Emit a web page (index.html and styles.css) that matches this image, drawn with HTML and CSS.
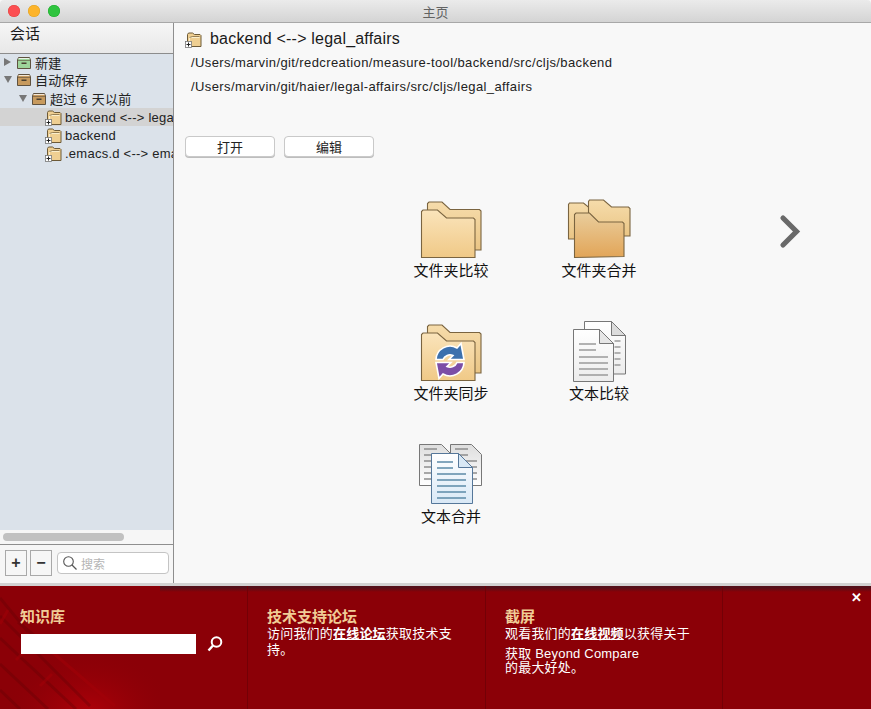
FILE: index.html
```html
<!DOCTYPE html>
<html lang="zh">
<head>
<meta charset="utf-8">
<title>主页</title>
<link rel="stylesheet" href="styles.css">
</head>
<body>
<svg class="defs" width="0" height="0" aria-hidden="true">
  <defs>
    <linearGradient id="fback" x1="0" y1="0" x2="0" y2="1"><stop offset="0" stop-color="#f6dcab"/><stop offset="1" stop-color="#eac585"/></linearGradient>
    <linearGradient id="ffront" x1="0" y1="0" x2="0" y2="1"><stop offset="0" stop-color="#fae4bb"/><stop offset="1" stop-color="#f0c987"/></linearGradient>
    <linearGradient id="fdark" x1="0" y1="0" x2="0" y2="1"><stop offset="0" stop-color="#e9cd9c"/><stop offset="1" stop-color="#e2a558"/></linearGradient>
    <linearGradient id="page" x1="0" y1="0" x2="0" y2="1"><stop offset="0" stop-color="#fff"/><stop offset="1" stop-color="#ececec"/></linearGradient>
    <linearGradient id="pagegrey" x1="0" y1="0" x2="0" y2="1"><stop offset="0" stop-color="#dedede"/><stop offset="1" stop-color="#fff"/></linearGradient>
    <linearGradient id="blue" x1="0" y1="0" x2="0" y2="1"><stop offset="0" stop-color="#fff"/><stop offset="1" stop-color="#d9e8f6"/></linearGradient>
    <g id="mini-folder">
      <path d="M2.500 15.500V3.500l1-1.500h4l2 1.500h5.500l1 1v11z" fill="#efcf92" stroke="#6d5a37"/>
      <path d="M4.500 14.500V6.500h10" fill="none" stroke="#fbeecb"/>
      <path d="M4.500 6.500l3-1h7" fill="none" stroke="#7d6a45" stroke-width=".8"/>
      <rect x=".5" y="10.500" width="6" height="6" fill="#fff" stroke="#777" stroke-width=".8"/>
      <path d="M3.500 11.500v4M1.500 13.500h4" stroke="#222" stroke-width="1"/>
    </g>
    <g id="mini-box">
      <path d="M2.500 3.500h11l1 2.500v8.500h-13V6z" fill="currentColor" stroke="#5f5240"/>
      <path d="M2.500 4.500h11" stroke="#fff" stroke-opacity=".75"/>
      <path d="M1.500 6.500h13" stroke="#5f5240" stroke-opacity=".6"/>
      <rect x="5.500" y="8.500" width="5" height="1.500" fill="#4a4030"/>
    </g>
  </defs>
</svg>
<div class="window">
  <header class="titlebar">
    <div class="lights"><span class="light red"></span><span class="light amber"></span><span class="light green"></span></div>
    <span class="title">主页</span>
  </header>
  <div class="body">
    <aside class="sidebar">
      <div class="side-head">会话</div>
      <ul class="tree">
        <li class="row l0"><span class="tri right"></span><svg class="ico box-green" width="16" height="16"><use href="#mini-box"/></svg><span class="lbl">新建</span></li>
        <li class="row l0"><span class="tri down"></span><svg class="ico box-tan" width="16" height="16"><use href="#mini-box"/></svg><span class="lbl">自动保存</span></li>
        <li class="row l1"><span class="tri down"></span><svg class="ico box-tan" width="16" height="16"><use href="#mini-box"/></svg><span class="lbl">超过 6 天以前</span></li>
        <li class="row l2 sel"><svg class="ico" width="17" height="17"><use href="#mini-folder"/></svg><span class="lbl">backend &lt;--&gt; legal_affairs</span></li>
        <li class="row l2"><svg class="ico" width="17" height="17"><use href="#mini-folder"/></svg><span class="lbl">backend</span></li>
        <li class="row l2"><svg class="ico" width="17" height="17"><use href="#mini-folder"/></svg><span class="lbl">.emacs.d &lt;--&gt; emacs</span></li>
      </ul>
      <div class="hscroll"><div class="thumb"></div></div>
      <div class="side-foot">
        <button class="sq">+</button>
        <button class="sq">−</button>
        <div class="search">
          <svg width="16" height="16" viewBox="0 0 16 16"><circle cx="6.500" cy="6.500" r="4.800" fill="none" stroke="#555" stroke-width="1.100"/><path d="M10 10l4.500 4.500" stroke="#555" stroke-width="1.200"/></svg>
          <span>搜索</span>
        </div>
      </div>
    </aside>
    <main class="content">
      <div class="head">
        <svg class="ico" width="17" height="17"><use href="#mini-folder"/></svg>
        <h1>backend &lt;--&gt; legal_affairs</h1>
      </div>
      <p class="path first">/Users/marvin/git/redcreation/measure-tool/backend/src/cljs/backend</p>
      <p class="path">/Users/marvin/git/haier/legal-affairs/src/cljs/legal_affairs</p>
      <div class="actions"><button class="btn">打开</button><button class="btn">编辑</button></div>
      <div class="launch">
        <div class="grid">
          <div class="tile">
            <svg width="64" height="62" viewBox="0 0 64 62">
              <path d="M8.500 53V6.500l1.500-1.500h13l8 7.500h29.500l1.500 1.500v39H54" fill="url(#fback)" stroke="#7a6440" stroke-width="1.100"/>
              <path d="M2.500 60.500V14.500l1.500-1.500h14.500l9 8h27l1.500 1.500v38z" fill="url(#ffront)" stroke="#7a6440" stroke-width="1.100"/>
            </svg>
            <span>文件夹比较</span>
          </div>
          <div class="tile">
            <svg width="64" height="62" viewBox="0 0 64 62">
              <path d="M1.500 42V7.500l1-1.500h14l6 5h8v31z" fill="url(#fback)" stroke="#7a6440" stroke-width="1.100"/>
              <path d="M21.500 39V4.500l1-1.500h14l8 7h17l1.500 1.500V39H56" fill="url(#fback)" stroke="#7a6440" stroke-width="1.100"/>
              <path d="M7.500 60.500V17.500l1.500-1.500h13.500l9 9h24l1.500 1.500v33z" fill="url(#fdark)" stroke="#7a6440" stroke-width="1.100"/>
            </svg>
            <span>文件夹合并</span>
          </div>
          <div class="tile">
            <svg width="64" height="62" viewBox="0 0 64 62">
              <path d="M8.500 53V6.500l1.500-1.500h13l8 7.500h29.500l1.500 1.500v39H54" fill="url(#fback)" stroke="#7a6440" stroke-width="1.100"/>
              <path d="M2.500 60.500V14.500l1.500-1.500h14.500l9 8h27l1.500 1.500v38z" fill="url(#ffront)" stroke="#7a6440" stroke-width="1.100"/>
              <path d="M17 39.500A14 14 0 0 1 38 28l4-4.500L45 39.500H30l4-4A7.500 7.500 0 0 0 24 39.500z" fill="#3c70ad" stroke="#fff" stroke-width="1.600"/>
              <path d="M45 42.500A14 14 0 0 1 24 54l-4 4.500L17 42.500H32l-4 4A7.500 7.500 0 0 0 38 42.500z" fill="#7c4ea6" stroke="#fff" stroke-width="1.600"/>
            </svg>
            <span>文件夹同步</span>
          </div>
          <div class="tile">
            <svg width="64" height="62" viewBox="0 0 64 62">
              <path d="M17.500 1.500h27l14 14v38.500h-41z" fill="url(#page)" stroke="#777"/>
              <path d="M44.500 1.500v14h14z" fill="#dcdcdc" stroke="#777"/>
              <path d="M47.500 21h6M47.500 27h6M47.500 33h6M47.500 39h6M47.500 45h6" stroke="#9b9b9b" stroke-width="1.400"/>
              <path d="M6.500 9.500h26l14 14v38h-40z" fill="url(#page)" stroke="#777"/>
              <path d="M32.500 9.500v14h14z" fill="#e6e6e6" stroke="#777"/>
              <path d="M12 24h17M12 30h17M12 37h29M12 43h29M12 49h29M12 55h29" stroke="#9b9b9b" stroke-width="1.500"/>
            </svg>
            <span>文本比较</span>
          </div>
          <div class="tile">
            <svg width="64" height="62" viewBox="0 0 64 62">
              <path d="M.5 1.500h22l9 9v32H.5z" fill="url(#pagegrey)" stroke="#777"/>
              <path d="M31.500 1.500h21l10 10v31h-31z" fill="url(#pagegrey)" stroke="#777"/>
              <path d="M5 6h13M5 12h13M5 18h22M5 24h22M5 30h22M5 36h22M36 6h13M36 12h13M36 18h22M36 24h22M36 30h22M36 36h22" stroke="#8d8d8d" stroke-width="1.500"/>
              <path d="M12.500 10.500h27l14 14v36h-41z" fill="url(#blue)" stroke="#55779a"/>
              <path d="M39.500 10.500v14h14z" fill="#d8e8f5" stroke="#55779a"/>
              <path d="M18 19h16M18 25h16M18 31h29M18 37h29M18 43h29M18 49h29M18 55h29" stroke="#5c8aa8" stroke-width="1.500"/>
            </svg>
            <span>文本合并</span>
          </div>
        </div>
        <svg class="next" width="24" height="36" viewBox="0 0 24 36"><path d="M5 4l13.500 13.500L5 31" fill="none" stroke="#696969" stroke-width="5.200" stroke-linecap="round"/></svg>
      </div>
    </main>
  </div>
  <div class="split"></div>
  <footer class="banner">
    <svg class="texture" width="160" height="123" viewBox="0 0 160 123">
      <defs><radialGradient id="glow" cx=".55" cy="1.050" r=".55"><stop offset="0" stop-color="#b20009"/><stop offset="1" stop-color="#8b0007" stop-opacity="0"/></radialGradient></defs>
      <rect width="160" height="123" fill="url(#glow)"/>
      <path d="M0 12l28 34M0 52l76 71M0 78l48 45M0 104l20 19M18 36l36 30M0 30l90 90" stroke="#5c0005" stroke-opacity=".32" stroke-width="3" fill="none"/>
      <path d="M45 60l70 60M8 24l-8 14M28 62l-12 12M52 88l-12 12" stroke="#a30008" stroke-opacity=".5" stroke-width="3" fill="none"/>
    </svg>
    <div class="strip"></div>
    <section class="col c1">
      <h2>知识库</h2>
      <div class="kb"><div class="kb-input"></div>
        <svg width="18" height="18" viewBox="0 0 18 18"><circle cx="10.500" cy="7" r="4.800" fill="none" stroke="#fff" stroke-width="2"/><path d="M7 10.500l-4.500 5" stroke="#fff" stroke-width="2.400"/></svg>
      </div>
    </section>
    <section class="col c2">
      <h2>技术支持论坛</h2>
      <p>访问我们的<a>在线论坛</a>获取技术支持。</p>
    </section>
    <section class="col c3">
      <h2>截屏</h2>
      <p class="tight1">观看我们的<a>在线视频</a>以获得关于</p>
      <p class="tight2">获取 Beyond Compare<br>的最大好处。</p>
    </section>
    <section class="col c4"><span class="close">✕</span></section>
  </footer>
</div>
</body>
</html>
```

FILE: styles.css
```css
* { box-sizing: border-box; }
html, body { margin: 0; padding: 0; height: 100%; }
body {
  width: 871px;
  height: 709px;
  overflow: hidden;
  font-family: "Liberation Sans", "Noto Sans CJK SC", sans-serif;
  color: #1a1a1a;
}
.defs { position: absolute; }
.window { display: flex; flex-direction: column; width: 871px; height: 709px; background: #f8f8f8; }

.titlebar {
  position: relative;
  flex: 0 0 23px;
  display: flex;
  align-items: center;
  justify-content: center;
  background: linear-gradient(#ebebeb, #d4d4d4);
  border-bottom: 1px solid #a8a8a8;
  border-radius: 4px 4px 0 0;
}
.lights { position: absolute; left: 8px; top: 5px; display: flex; gap: 8px; }
.light { width: 12px; height: 12px; border-radius: 50%; }
.red { background: #fc4f52; box-shadow: inset 0 0 0 .5px #e0443e; }
.amber { background: #fdb42a; box-shadow: inset 0 0 0 .5px #dea123; }
.green { background: #2fc43f; box-shadow: inset 0 0 0 .5px #1aab29; }
.title { font-size: 13px; color: #626262; }

.body { flex: 0 0 560px; display: flex; }
.sidebar {
  flex: 0 0 174px;
  width: 174px;
  display: flex;
  flex-direction: column;
  border-right: 1px solid #8e8e8e;
  background: #f6f6f6;
  overflow: hidden;
}
.side-head {
  flex: 0 0 31px;
  padding: 1px 0 0 10px;
  font-size: 15px;
  line-height: 19px;
  background: linear-gradient(#f6f6f6, #e8e8e8);
  border-bottom: 1px solid #8c8c8c;
}
.tree {
  flex: 1;
  margin: 0;
  padding: 0;
  list-style: none;
  background: #dbe2ea;
  overflow: hidden;
}
.row {
  display: flex;
  align-items: center;
  height: 18px;
  font-size: 13px;
  white-space: nowrap;
  color: #222;
}
.row.l0 { padding-left: 4px; }
.row.l0:first-child { height: 16px; }
.row.l1 { padding-left: 19px; height: 20px; }
.row.l2 { padding-left: 45px; }
.row.sel { background: #d3d3d3; }
.tri { flex: 0 0 auto; width: 0; height: 0; margin-right: 4px; }
.tri.right { border-left: 7px solid #777; border-top: 4px solid transparent; border-bottom: 4px solid transparent; margin-right: 5px; }
.tri.down { border-top: 7px solid #777; border-left: 4px solid transparent; border-right: 4px solid transparent; }
.ico { flex: 0 0 auto; display: block; }
.box-green { color: #9ed49a; }
.box-tan { color: #c79a5e; }
.lbl { margin-left: 3px; letter-spacing: .25px; }

.hscroll { flex: 0 0 14px; padding: 3px 3px 0; background: #f6f6f6; }
.thumb { width: 121px; height: 8px; border-radius: 4px; background: #c1c1c1; }
.side-foot {
  flex: 0 0 39px;
  display: flex;
  align-items: center;
  gap: 3px;
  padding: 0 4px 2px 5px;
  border-top: 1px solid #8e8e8e;
  background: #f6f6f6;
}
.sq {
  width: 22px;
  height: 26px;
  padding: 0;
  background: #f6f6f6;
  border: 1px solid #a9a9a9;
  font: bold 16px "Liberation Sans", sans-serif;
  color: #333;
}
.search {
  display: flex;
  align-items: center;
  gap: 3px;
  width: 112px;
  height: 22px;
  margin-left: 2px;
  padding-left: 4px;
  background: #fff;
  border: 1px solid #c4c4c4;
  border-radius: 4px;
  font-size: 12px;
  color: #b5b5b5;
}

.content { flex: 1; display: flex; flex-direction: column; padding: 6px 0 0 11px; background: #f8f8f8; min-width: 0; }
.head { display: flex; align-items: center; gap: 8px; height: 20px; }
h1 { margin: 0; font-weight: 400; font-size: 16px; letter-spacing: .2px; color: #1a1a1a; }
.path { margin: 0 0 0 6px; font-size: 13px; line-height: 24px; letter-spacing: .4px; color: #222; }
.path.first { margin-top: 2px; }
.actions { display: flex; gap: 9px; margin-top: 37px; }
.btn {
  width: 90px;
  height: 21px;
  padding: 0 0 1px;
  background: #fff;
  border: 1px solid #c9c9c9;
  border-radius: 4px;
  box-shadow: 0 1px 0 #bdbdbd;
  font: 13px "Liberation Sans", "Noto Sans CJK SC", sans-serif;
  color: #222;
}
.launch { display: flex; align-items: flex-start; margin-top: 40px; }
.grid { display: grid; grid-template-columns: 148px 148px; grid-auto-rows: 123px; margin-left: 192px; }
.tile { display: flex; flex-direction: column; align-items: center; font-size: 15px; line-height: 20px; color: #111; }
.tile svg { display: block; }
.tile span { margin-top: 2px; }
.next { margin: 17px 0 0 105px; }

.split { flex: 0 0 3px; background: #d2d2d2; }
.banner {
  position: relative;
  flex: 1;
  display: grid;
  grid-template-columns: 248px 238px 237px 148px;
  background: #8b0007;
  color: #fff;
  overflow: hidden;
}
.texture { position: absolute; left: 0; top: 0; }
.strip {
  position: absolute;
  left: 160px;
  right: 0;
  top: 0;
  height: 6px;
  background: linear-gradient(#55101a 30%, #8b0007);
}
.col { position: relative; padding: 21px 0 0 20px; border-right: 1px solid #730006; }
.c2, .c3 { padding-left: 19px; }
.c4 { border-right: 0; }
h2 { margin: 0; font-size: 15px; line-height: 20px; font-weight: 700; color: #f0cc96; }
.col p { margin: 0; font-size: 13px; line-height: 16px; letter-spacing: .2px; color: #fff; width: 190px; }
.col a { font-weight: 700; text-decoration: underline; }
.c2 p { margin-top: -1px; }
.c3 .tight1 { margin-top: -1px; }
.c3 .tight2 { margin-top: 5px; line-height: 14px; }
.kb { display: flex; align-items: center; gap: 10px; margin-top: 7px; }
.kb-input { width: 175px; height: 20px; margin-left: 1px; background: #fff; }
.close { position: absolute; right: 9px; top: 5px; font-size: 13px; font-weight: 700; line-height: 14px; color: #fff; }
```
